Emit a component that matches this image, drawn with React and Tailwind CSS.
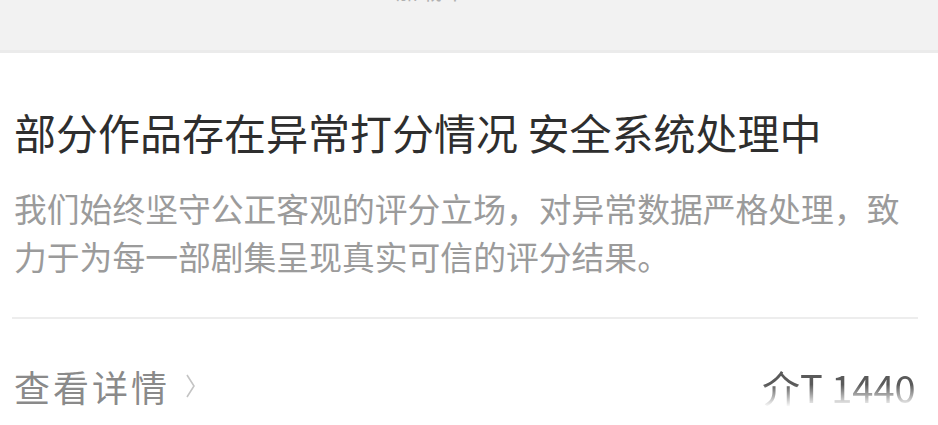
export default function App() {
  return (
    <div
      className="w-[938px] h-[425px] overflow-hidden bg-white relative"
      style={{ fontFamily: '"Noto Sans CJK SC", "Noto Sans", sans-serif' }}
    >
      <div className="h-[50px] bg-[#f2f2f2] relative overflow-hidden">
        <span className="absolute left-[396px] top-[-24px] text-[22px] leading-[26px] text-[#b0b0b0] tracking-[2px]">
          加载中
        </span>
      </div>
      <div className="h-[3px] bg-[#ebebeb]" />
      <div className="px-[12px] pt-[49px]">
        <h1 className="px-[2px] text-[42px] leading-[59px] text-[#2e2e2e] font-normal whitespace-nowrap">
          部分作品存在异常打分情况 安全系统处理中
        </h1>
        <p className="mt-[23px] px-[2px] text-[32.8px] leading-[48px] text-[#9b9b9b] w-[912px]">
          我们始终坚守公正客观的评分立场，对异常数据严格处理，致力于为每一部剧集呈现真实可信的评分结果。
        </p>
        <div className="mt-[37px] h-[2px] bg-[#ededed] w-[906px]" />
        <div className="mt-[42px] flex items-center h-[50px] px-[2px]">
          <span className="text-[36px] leading-[50px] text-[#8a8a8a] tracking-[3px]">查看详情</span>
          <svg width="12" height="26" viewBox="0 0 12 26" className="ml-[15px]">
            <path d="M2 2 L9 13 L2 24" fill="none" stroke="#c4c4c4" strokeWidth="1.6" />
          </svg>
        </div>
      </div>
      <div
        className="absolute left-[762px] top-[362px] text-[38px] leading-[50px] text-[#5a5a5a] whitespace-nowrap"
        style={{ WebkitMaskImage: 'linear-gradient(to bottom, black 45%, transparent 90%)', maskImage: 'linear-gradient(to bottom, black 45%, transparent 90%)' }}
      >
        介T 1440
      </div>
    </div>
  );
}
